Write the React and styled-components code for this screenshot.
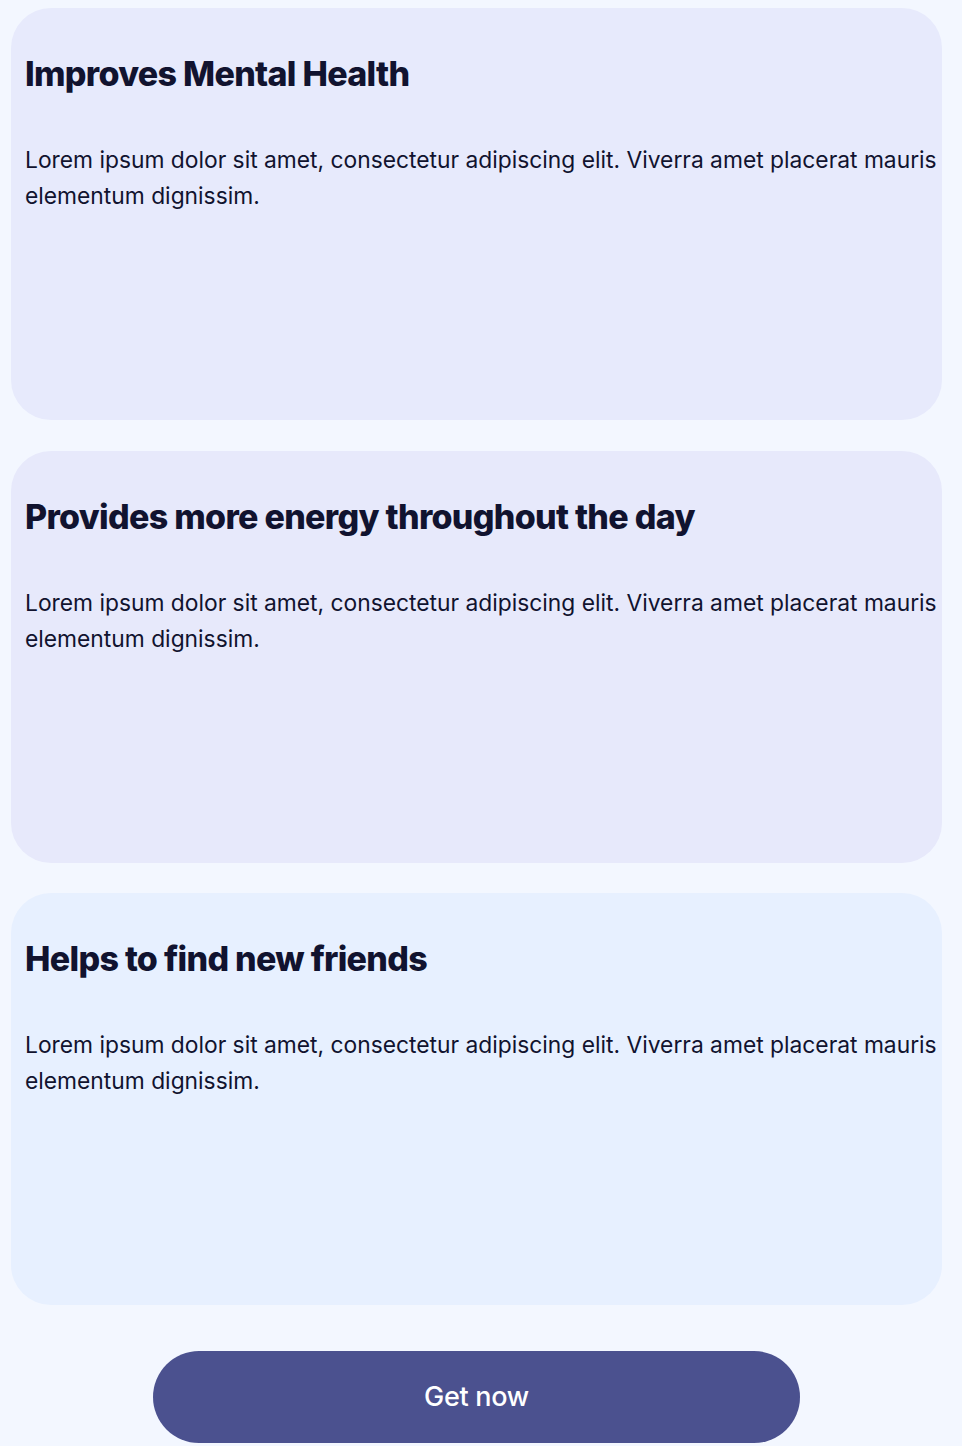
import React from "react";
import styled, { createGlobalStyle } from "styled-components";

const Global = createGlobalStyle`
  html, body { margin: 0; padding: 0; background: #F3F7FF; }
  body { font-family: Inter, "Noto Sans", sans-serif; color: #11132F; }
  * { box-sizing: border-box; }
`;

const Page = styled.main`
  display: flex;
  flex-direction: column;
  align-items: stretch;
  gap: 30.5px;
  padding: 8px 20px 4px 11px;
`;

const Card = styled.section`
  height: 412px;
  border-radius: 40px;
  background: ${(p) => p.$bg};
  padding: 44px 0 0 14px;
`;

const Title = styled.h2`
  margin: 0;
  font-size: 34px;
  line-height: 44px;
  font-weight: 800;
  letter-spacing: -0.7px;
  color: #11132F;
`;

const Body = styled.p`
  margin: 46px 0 0;
  font-size: 22.8px;
  line-height: 36px;
  font-weight: 400;
  letter-spacing: 0;
  color: #11132F;
`;

const ButtonRow = styled.div`
  display: flex;
  justify-content: center;
  padding-top: 15px;
`;

const Button = styled.button`
  width: 647px;
  height: 92px;
  border: none;
  border-radius: 46px;
  background: #4B518F;
  color: #fff;
  font-family: Inter, sans-serif;
  font-size: 27px;
  font-weight: 500;
  letter-spacing: -0.3px;
  cursor: pointer;
`;

const items = [
  { title: "Improves Mental Health", bg: "#E7EAFC" },
  { title: "Provides more energy throughout the day", bg: "#E7E9FB" },
  { title: "Helps to find new friends", bg: "#E7F0FF" },
];

const text =
  "Lorem ipsum dolor sit amet, consectetur adipiscing elit. Viverra amet placerat mauris elementum dignissim.";

export default function App() {
  return (
    <>
      <Global />
      <Page>
        {items.map((it) => (
          <Card key={it.title} $bg={it.bg}>
            <Title>{it.title}</Title>
            <Body>{text}</Body>
          </Card>
        ))}
        <ButtonRow>
          <Button>Get now</Button>
        </ButtonRow>
      </Page>
    </>
  );
}
